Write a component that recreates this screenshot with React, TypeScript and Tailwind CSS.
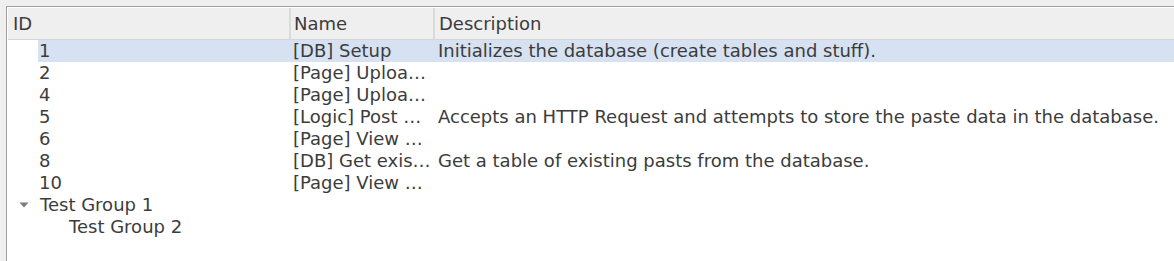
import React from "react";

interface IRow {
  id: string;
  name: string;
  desc: string;
}

const rows: IRow[] = [
  { id: "1", name: "[DB] Setup", desc: "Initializes the database (create tables and stuff)." },
  { id: "2", name: "[Page] Uploa…", desc: "" },
  { id: "4", name: "[Page] Uploa…", desc: "" },
  { id: "5", name: "[Logic] Post …", desc: "Accepts an HTTP Request and attempts to store the paste data in the database." },
  { id: "6", name: "[Page] View …", desc: "" },
  { id: "8", name: "[DB] Get exis…", desc: "Get a table of existing pasts from the database." },
  { id: "10", name: "[Page] View …", desc: "" },
];

function App() {
  return (
    <div
      className="w-[1174px] h-[261px] bg-[#efefef] pt-[6px] pl-[6px] overflow-hidden text-[18px] text-[#3c3c3c]"
      style={{ fontFamily: '"DejaVu Sans", sans-serif' }}
    >
      <div className="h-full border-t border-l border-[#a0a0a0] bg-white pt-[1px] pl-[1px]">
        {/* header */}
        <div className="flex h-[32px] bg-[#efefef] border-b border-[#d6d6d6] leading-[31px]">
          <div className="w-[283px] pl-[5px] border-r-2 border-[#dadada]">ID</div>
          <div className="w-[144px] pl-[3px] border-r-2 border-[#dadada]">Name</div>
          <div className="flex-1 pl-[4px]">Description</div>
        </div>

        {/* rows */}
        <div className="leading-[22px]">
          {rows.map((r, index) => (
            <div key={index} className="flex h-[22px] pl-[30px]">
              <div className={`flex flex-1 ${index === 0 ? "bg-[#d6e1f2]" : ""}`}>
                <div className="w-[254px] pl-[1px]">{r.id}</div>
                <div className="w-[144px] pl-[1px] whitespace-nowrap">{r.name}</div>
                <div className="flex-1 pl-[2px] whitespace-nowrap">{r.desc}</div>
              </div>
            </div>
          ))}

          <div className="flex items-center h-[22px]">
            <div className="w-[30px] flex justify-center pl-[1px]">
              <svg width="10" height="6" viewBox="0 0 10 6">
                <path d="M0.5 0.5 L9.5 0.5 L5 5.5 Z" fill="#7c7c7c" />
              </svg>
            </div>
            <div className="pl-[2px]">Test Group 1</div>
          </div>
          <div className="flex h-[22px] pl-[61px]">
            <div>Test Group 2</div>
          </div>
        </div>
      </div>
    </div>
  );
}

export default App;
